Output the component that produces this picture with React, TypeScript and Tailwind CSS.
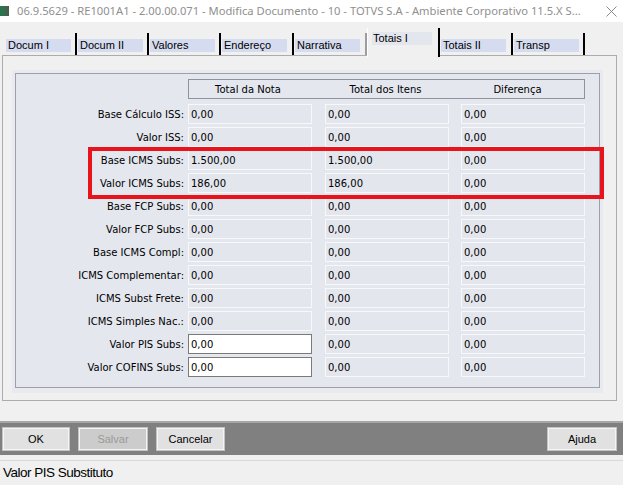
import React from "react";

const tabs = [
  { label: "Docum I", w: "w-[72px]" },
  { label: "Docum II", w: "w-[72px]" },
  { label: "Valores", w: "w-[72px]" },
  { label: "Endereço", w: "w-[73px]" },
  { label: "Narrativa", w: "w-[73px]" },
  { label: "Totais I", w: "w-[73px]", active: true },
  { label: "Totais II", w: "w-[73px]" },
  { label: "Transp", w: "w-[72px]" },
];

type Row = { label: string; a: string; b: string; c: string; edit?: boolean };

const rows: Row[] = [
  { label: "Base Cálculo ISS:", a: "0,00", b: "0,00", c: "0,00" },
  { label: "Valor ISS:", a: "0,00", b: "0,00", c: "0,00" },
  { label: "Base ICMS Subs:", a: "1.500,00", b: "1.500,00", c: "0,00" },
  { label: "Valor ICMS Subs:", a: "186,00", b: "186,00", c: "0,00" },
  { label: "Base FCP Subs:", a: "0,00", b: "0,00", c: "0,00" },
  { label: "Valor FCP Subs:", a: "0,00", b: "0,00", c: "0,00" },
  { label: "Base ICMS Compl:", a: "0,00", b: "0,00", c: "0,00" },
  { label: "ICMS Complementar:", a: "0,00", b: "0,00", c: "0,00" },
  { label: "ICMS Subst Frete:", a: "0,00", b: "0,00", c: "0,00" },
  { label: "ICMS Simples Nac.:", a: "0,00", b: "0,00", c: "0,00" },
  { label: "Valor PIS Subs:", a: "0,00", b: "0,00", c: "0,00", edit: true },
  { label: "Valor COFINS Subs:", a: "0,00", b: "0,00", c: "0,00", edit: true },
];

function Field({ value, edit }: { value: string; edit?: boolean }) {
  return (
    <div
      className={
        edit
          ? "w-[124px] h-[20px] bg-white border border-[#7a7a7a] pl-[2px] leading-[19px]"
          : "w-[124px] h-[20px] bg-[#e3e6ed] border border-[#f7f8fa] pl-[2px] leading-[19px]"
      }
    >
      {value}
    </div>
  );
}

function Button({ label, w, disabled }: { label: string; w: string; disabled?: boolean }) {
  return (
    <div
      className={`${w} h-[24px] border border-[#c4c4c4] shadow-[inset_0_0_0_1px_#f4f4f4] flex items-center justify-center text-[11px] ${
        disabled ? "bg-[#cccccc] text-[#9a9a9a]" : "bg-[#e1e1e1] text-black"
      }`}
    >
      {label}
    </div>
  );
}

export default function App() {
  return (
    <div className="w-[623px] h-[485px] bg-[#f0f0f0] overflow-hidden flex flex-col relative font-['Liberation_Sans',sans-serif]">
      {/* title bar */}
      <div className="h-[22px] bg-white flex items-center shrink-0">
        <div className="w-[9px] h-[10px] mt-[-1px] bg-gradient-to-r from-[#1d7a4c] to-[#4a5a52]" />
        <div className="ml-[8px] text-[11.2px] text-[#8f8f8f] font-['Noto_Sans',sans-serif] whitespace-nowrap">
          06.9.5629 - RE1001A1 - 2.00.00.071 - Modifica Documento - 10 - TOTVS S.A - Ambiente Corporativo 11.5.X S...
        </div>
        <svg className="ml-auto mr-[6px]" width="11" height="11" viewBox="0 0 11 11">
          <path d="M0.5 0.5 L10.5 10.5 M10.5 0.5 L0.5 10.5" stroke="#8a8a8a" strokeWidth="1" />
        </svg>
      </div>

      {/* tabs */}
      <div className="h-[33px] shrink-0 flex items-end pl-[5px] relative z-10">
        {tabs.map((t) =>
          t.active ? (
            <div
              key={t.label}
              className={`${t.w} h-[29px] mb-[-2px] bg-[#f0f0f0] border-l border-white border-r-2 border-r-black pl-[4px] pt-[4px]`}
            >
              <div className="w-[60px] h-[13px] bg-[#e4e6ee] text-[11px] leading-[13px] pl-[1px]">{t.label}</div>
            </div>
          ) : (
            <div
              key={t.label}
              className={`${t.w} h-[22px] border-r-2 ${
                t.label === "Narrativa" ? "border-r-[#9c9c9c]" : "border-r-black"
              } pt-[6px] pl-[1px]`}
            >
              <div className="w-[65px] h-[13px] bg-[#d5dcef] text-[11px] leading-[13px] pl-[2px]">{t.label}</div>
            </div>
          )
        )}
      </div>

      {/* panel */}
      <div className="ml-[2px] w-[615px] h-[346px] shrink-0 border border-[#acacac] bg-[#f0f0f0] pl-[9px] pt-[14px]">
        <div className="w-[591px] h-[323px] bg-[#e8eaf0] pt-[3px] pl-[3px] pr-[3px] pb-[5px] flex">
          <div className="flex-1 border border-[#9ca0aa] bg-[#e4e7ee] font-['DejaVu_Sans',sans-serif] text-[10px] text-black">
            <div className="ml-[172px] mt-[5px] w-[397px] h-[20px] border border-[#8e929c] flex items-center">
              <div className="w-[118px] text-center">Total da Nota</div>
              <div className="w-[157px] text-center">Total dos Itens</div>
              <div className="w-[107px] text-center">Diferença</div>
            </div>
            <div className="mt-[5px] flex flex-col gap-[3px]">
              {rows.map((r) => (
                <div key={r.label} className="flex h-[20px] items-center">
                  <div className="w-[168px] text-right whitespace-nowrap">{r.label}</div>
                  <div className="ml-[4px]">
                    <Field value={r.a} edit={r.edit} />
                  </div>
                  <div className="ml-[13px]">
                    <Field value={r.b} />
                  </div>
                  <div className="ml-[12px]">
                    <Field value={r.c} />
                  </div>
                </div>
              ))}
            </div>
          </div>
        </div>
      </div>

      {/* button bar */}
      <div className="mt-[20px] h-[34px] shrink-0 border-t-2 border-[#a6a6a6] bg-[#808080] flex items-start pt-[4px] pl-[2px] pr-[6px] gap-[8px]">
        <Button label="OK" w="w-[68px]" />
        <Button label="Salvar" w="w-[70px]" disabled />
        <Button label="Cancelar" w="w-[69px]" />
        <div className="ml-auto">
          <Button label="Ajuda" w="w-[70px]" />
        </div>
      </div>

      {/* status bar */}
      <div className="flex-1 border-t-[5px] border-[#f0f0f0] flex flex-col">
        <div className="h-px bg-[#d9d9d9]" />
        <div className="pl-[3px] pt-[2px] text-[13.5px] tracking-[-0.5px] text-black">Valor PIS Substituto</div>
      </div>

      {/* highlight */}
      <div className="absolute left-[88px] top-[147px] w-[516px] h-[52px] border-[4px] border-[#e8141b]" />
    </div>
  );
}
